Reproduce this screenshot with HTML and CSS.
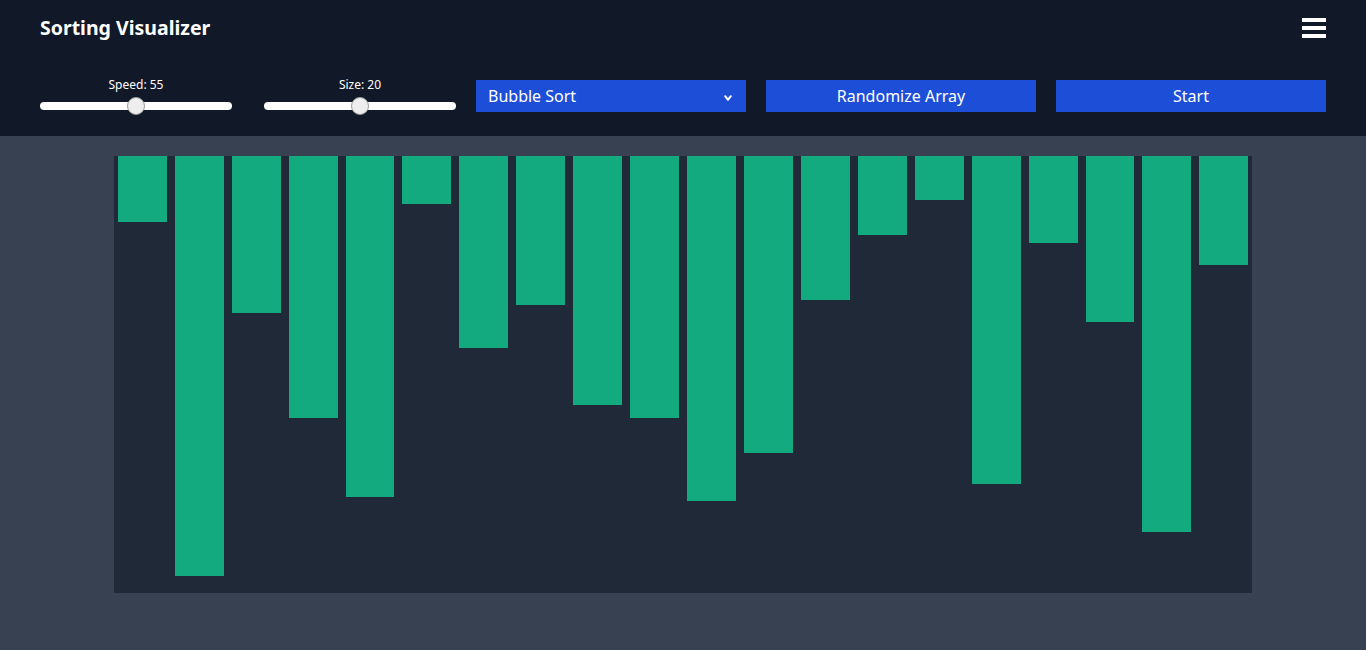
FILE: index.html
```html
<!DOCTYPE html>
<html lang="en">
<head>
<meta charset="utf-8">
<title>Sorting Visualizer</title>
<link rel="stylesheet" href="styles.css">
</head>
<body>
<header class="header">
  <div class="top-row">
    <h1 class="title">Sorting Visualizer</h1>
    <button class="menu" aria-label="Menu"><span></span><span></span><span></span></button>
  </div>
  <div class="controls">
    <div class="slider">
      <label class="slider-label">Speed: 55</label>
      <input class="range" type="range" min="10" max="100" value="55">
    </div>
    <div class="slider">
      <label class="slider-label">Size: 20</label>
      <input class="range" type="range" min="5" max="35" value="20">
    </div>
    <div class="select">
      <span>Bubble Sort</span>
      <svg class="chevron" width="8" height="8" viewBox="0 0 8 8"><path d="M1.2 2.2 L4 5.8 L6.8 2.2" fill="none" stroke="#fff" stroke-width="2" stroke-linecap="round" stroke-linejoin="round"/></svg>
    </div>
    <button class="btn">Randomize Array</button>
    <button class="btn">Start</button>
  </div>
</header>
<main class="main">
  <div class="chart">
    <div class="bar" style="height:66px"></div>
    <div class="bar" style="height:420px"></div>
    <div class="bar" style="height:157px"></div>
    <div class="bar" style="height:262px"></div>
    <div class="bar" style="height:341px"></div>
    <div class="bar" style="height:48px"></div>
    <div class="bar" style="height:192px"></div>
    <div class="bar" style="height:149px"></div>
    <div class="bar" style="height:249px"></div>
    <div class="bar" style="height:262px"></div>
    <div class="bar" style="height:345px"></div>
    <div class="bar" style="height:297px"></div>
    <div class="bar" style="height:144px"></div>
    <div class="bar" style="height:79px"></div>
    <div class="bar" style="height:44px"></div>
    <div class="bar" style="height:328px"></div>
    <div class="bar" style="height:87px"></div>
    <div class="bar" style="height:166px"></div>
    <div class="bar" style="height:376px"></div>
    <div class="bar" style="height:109px"></div>
  </div>
</main>
</body>
</html>
```
FILE: styles.css
```css
* { box-sizing: border-box; }
html, body { margin: 0; padding: 0; height: 100%; }
body {
  font-family: "Noto Sans", "Open Sans", sans-serif;
  background: #374151;
  color: #fff;
  overflow: hidden;
}
.header {
  background: #111827;
  padding: 16px 40px 24px;
}
.top-row {
  display: flex;
  justify-content: space-between;
  align-items: center;
  height: 24px;
}
.title {
  margin: 0;
  font-size: 19.5px;
  line-height: 26px;
  font-weight: 700;
}
.menu {
  display: flex;
  flex-direction: column;
  gap: 4px;
  padding: 0;
  border: 0;
  background: none;
  width: 24px;
}
.menu span {
  display: block;
  width: 24px;
  height: 4px;
  background: #fff;
}
.controls {
  display: flex;
  align-items: flex-end;
  margin-top: 36px;
}
.slider {
  width: 192px;
  display: flex;
  flex-direction: column;
  align-items: center;
  padding-bottom: 2px;
  margin-right: 32px;
}
.slider + .slider { margin-right: 20px; }
.slider-label {
  font-size: 12px;
  line-height: 18px;
  margin-bottom: 8px;
}
.range {
  -webkit-appearance: none;
  appearance: none;
  width: 192px;
  height: 8px;
  margin: 0;
  border-radius: 4px;
  background: #fff;
  outline: none;
}
.range::-webkit-slider-thumb {
  -webkit-appearance: none;
  appearance: none;
  width: 18px;
  height: 18px;
  border-radius: 50%;
  background: #eeeeee;
  border: 1px solid #9a9a9a;
}
.select {
  width: 270px;
  height: 32px;
  background: #1d4ed8;
  display: flex;
  align-items: center;
  justify-content: space-between;
  padding: 0 14px 0 12px;
  font-size: 16px;
  margin-right: 20px;
}
.chevron { display: block; margin-top: 3px; }
.btn {
  width: 270px;
  height: 32px;
  background: #1d4ed8;
  color: #fff;
  border: 0;
  font-family: inherit;
  font-size: 16px;
  padding: 0;
}
.btn + .btn { margin-left: 20px; }
.main {
  padding-top: 20px;
}
.chart {
  width: 83.3333%;
  height: 437px;
  margin: 0 auto;
  background: #1f2937;
  display: flex;
  align-items: flex-start;
}
.bar {
  flex: 1;
  margin: 0 4px;
  background: #13aa80;
}
```
